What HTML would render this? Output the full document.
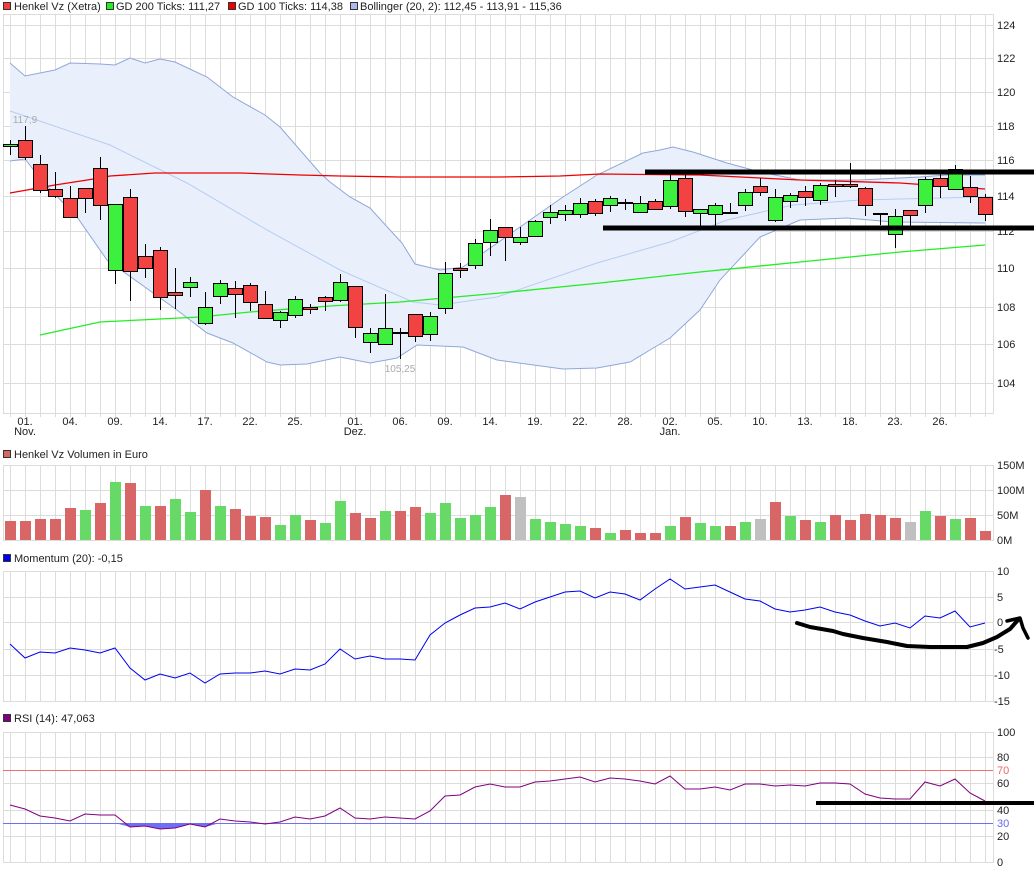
<!DOCTYPE html>
<html><head><meta charset="utf-8"><style>
html,body{margin:0;padding:0;background:#fff;width:1034px;height:873px;overflow:hidden}
svg{display:block}
text{font-family:"Liberation Sans",sans-serif;font-size:11px;fill:#222}
</style></head><body>
<svg id="s" width="1034" height="873" xmlns="http://www.w3.org/2000/svg">
<g id="grid" stroke="#dcdcdc" stroke-width="1" shape-rendering="crispEdges"></g>
<g id="boll"></g>
<g id="ma"></g>
<g id="candles" shape-rendering="crispEdges"></g>
<g id="vol" shape-rendering="crispEdges"></g>
<g id="ind"></g>
<!-- legends -->
<rect x="3.5" y="2.5" width="7" height="7" fill="#f04040" stroke="#333"/><text x="14" y="10">Henkel Vz (Xetra)</text>
<rect x="106.5" y="2.5" width="7" height="7" fill="#22ee22" stroke="#333"/><text x="116" y="10">GD 200 Ticks: 111,27</text>
<rect x="228.5" y="2.5" width="7" height="7" fill="#ee0000" stroke="#333"/><text x="238" y="10">GD 100 Ticks: 114,38</text>
<rect x="350.5" y="2.5" width="7" height="7" fill="#aabbe8" stroke="#333"/><text x="360" y="10">Bollinger (20, 2): 112,45 - 113,91 - 115,36</text>
<rect x="3.5" y="450.5" width="7" height="7" fill="#d96666" stroke="#333"/><text x="14" y="458">Henkel Vz Volumen in Euro</text>
<rect x="3.5" y="554.5" width="7" height="7" fill="#0000ee" stroke="#333"/><text x="14" y="562">Momentum (20): -0,15</text>
<rect x="3.5" y="714.5" width="7" height="7" fill="#800080" stroke="#333"/><text x="14" y="722">RSI (14): 47,063</text>
<!-- price labels -->
<g>
<text x="997" y="29">124</text><text x="997" y="62">122</text><text x="997" y="96">120</text><text x="997" y="130">118</text><text x="997" y="164">116</text><text x="997" y="200">114</text><text x="997" y="235">112</text><text x="997" y="272">110</text><text x="997" y="311">108</text><text x="997" y="348">106</text><text x="997" y="387">104</text>
<text x="997" y="469">150M</text><text x="997" y="494">100M</text><text x="997" y="519">50M</text><text x="997" y="544">0M</text>
<text x="997" y="575">10</text><text x="997" y="601">5</text><text x="997" y="626">0</text><text x="994" y="653">-5</text><text x="994" y="679">-10</text><text x="994" y="705">-15</text>
<text x="997" y="736">100</text><text x="997" y="761">80</text><text x="997" y="774" style="fill:#ee6666">70</text><text x="997" y="787">60</text><text x="997" y="814">40</text><text x="997" y="827" style="fill:#6666ee">30</text><text x="997" y="840">20</text><text x="997" y="866">0</text>
</g>
<g text-anchor="middle">
<text x="25" y="425">01.</text><text x="25" y="435">Nov.</text><text x="70" y="425">04.</text><text x="115" y="425">09.</text><text x="160" y="425">14.</text><text x="205" y="425">17.</text><text x="250" y="425">22.</text><text x="295" y="425">25.</text><text x="355" y="425">01.</text><text x="355" y="435">Dez.</text><text x="400" y="425">06.</text><text x="445" y="425">09.</text><text x="490" y="425">14.</text><text x="535" y="425">19.</text><text x="580" y="425">22.</text><text x="625" y="425">28.</text><text x="670" y="425">02.</text><text x="670" y="435">Jan.</text><text x="715" y="425">05.</text><text x="760" y="425">10.</text><text x="805" y="425">13.</text><text x="850" y="425">18.</text><text x="895" y="425">23.</text><text x="940" y="425">26.</text>
<text x="25" y="123" style="fill:#aaa;font-size:10px">117,9</text>
<text x="400" y="372" style="fill:#aaa;font-size:10px">105,25</text>
</g>
<g id="draw"></g>
</svg>
<script>
var NS="http://www.w3.org/2000/svg";
function el(p,t,a){var e=document.createElementNS(NS,t);for(var k in a)e.setAttribute(k,a[k]);document.getElementById(p).appendChild(e);return e;}
// grid
var panels=[[14,413,[14,25,58,92,126,160,196,231,268,307,344,383,413]],[465,540,[465,490,515,540]],[571,701,[571,597,622,649,675,701]],[732,862,[732,757,783,810,836,862]]];
panels.forEach(function(p){
 for(var x=10;x<=985;x+=15) el("grid","line",{x1:x+.5,y1:p[0],x2:x+.5,y2:p[1]});
 el("grid","line",{x1:3.5,y1:p[0],x2:3.5,y2:p[1]});
 el("grid","line",{x1:993.5,y1:p[0],x2:993.5,y2:p[1]});
 p[2].forEach(function(y){el("grid","line",{x1:3,y1:y+.5,x2:994,y2:y+.5});});
});
for(var x=10;x<=985;x+=15) el("grid","line",{x1:x+.5,y1:413,x2:x+.5,y2:417});
// bollinger
var up=[[10,63],[25,76],[55,70],[70,63],[100,64],[115,65],[130,58],[145,63],[160,59],[175,62],[207,77],[233,97],[265,115],[280,127],[320,173],[330,182],[350,197],[370,208],[390,230],[402,243],[415,264],[440,270],[463,267],[530,220],[563,197],[597,175],[643,153],[660,150],[673,147],[693,152],[727,163],[760,172],[800,180],[860,180],[920,177],[947,175],[985,175]];
var lo=[[10,161],[25,159],[43,182],[77,217],[107,260],[177,310],[207,333],[233,343],[267,362],[280,365],[307,364],[340,357],[370,363],[397,358],[417,345],[463,347],[497,360],[563,369],[597,368],[630,362],[650,350],[670,338],[700,310],[720,280],[760,237],[800,220],[847,218],[893,222],[985,223]];
var mid=[[10,111],[25,116],[110,145],[187,183],[267,230],[340,270],[413,302],[440,305],[497,297],[597,263],[670,242],[727,220],[793,205],[860,200],[985,197]];
function pts(a){return a.map(function(p){return p[0]+","+p[1]}).join(" ");}
el("boll","polygon",{points:pts(up)+" "+pts(lo.slice().reverse()),fill:"#e9f0fc"});
el("boll","polyline",{points:pts(up),fill:"none",stroke:"#8fa8d8","stroke-width":1});
el("boll","polyline",{points:pts(lo),fill:"none",stroke:"#8fa8d8","stroke-width":1});
el("boll","polyline",{points:pts(mid),fill:"none",stroke:"#b5cdf2","stroke-width":1});
el("ma","polyline",{points:"10,193 55,185 100,178 110,176 155,173 240,173 300,175 340,176 400,177 500,177 560,176 600,174 700,175 800,180 900,183 985,189",fill:"none",stroke:"#ee0000","stroke-width":1.3});
el("ma","polyline",{points:"40,335 100,322 200,317 250,312 330,306 400,302 500,293 600,283 700,272 800,262 900,252 985,245",fill:"none",stroke:"#22ee22","stroke-width":1.3});
// candles: [bodyTop, bodyBot, wickHi, wickLo, color] x=10+15k
var C=[[144,146,140,155,'g'],[140,157,126,160,'r'],[164,190,155,193,'r'],[189,196,172,198,'r'],[198,217,186,217,'r'],[188,198,188,213,'r'],[168,205,157,220,'r'],[204,270,204,284,'g'],[197,271,189,301,'r'],[256,268,244,278,'r'],[250,297,247,310,'r'],[292,295,268,309,'r'],[282,287,277,297,'g'],[307,323,292,325,'g'],[283,296,280,304,'g'],[288,294,281,318,'r'],[285,302,283,311,'r'],[304,318,291,318,'r'],[312,320,311,328,'g'],[299,315,296,318,'g'],[307,309,304,314,'r'],[297,301,296,311,'r'],[282,300,274,302,'g'],[286,327,286,338,'r'],[333,342,328,353,'g'],[328,344,294,344,'g'],[332,333,328,359,'k'],[314,336,314,342,'r'],[316,334,312,341,'g'],[273,308,262,314,'g'],[268,270,263,278,'r'],[243,265,239,269,'g'],[230,242,219,256,'g'],[227,237,227,261,'r'],[237,242,227,245,'g'],[221,236,220,236,'g'],[212,217,205,224,'g'],[210,214,205,221,'g'],[203,214,198,218,'g'],[201,213,199,216,'r'],[198,205,196,212,'g'],[202,203,199,210,'k'],[203,212,196,213,'g'],[201,209,199,210,'r'],[180,206,174,209,'g'],[178,211,174,217,'r'],[209,213,209,226,'g'],[205,214,203,226,'g'],[212,213,203,213,'k'],[192,205,189,211,'g'],[186,192,178,196,'r'],[197,220,189,222,'g'],[195,201,193,208,'g'],[191,197,186,206,'r'],[185,200,183,205,'g'],[184,186,180,197,'r'],[184,186,163,188,'r'],[188,205,187,216,'r'],[213,214,213,225,'k'],[216,234,209,248,'g'],[210,215,210,226,'r'],[179,205,177,213,'g'],[178,186,170,198,'r'],[169,189,165,189,'g'],[187,196,176,203,'r'],[197,214,194,221,'r']];
C.forEach(function(c,k){var x=10+15*k;
 el("candles","line",{x1:x+.5,y1:c[2],x2:x+.5,y2:c[3],stroke:"#000","stroke-width":1.3});
 if(c[4]=='k'){el("candles","rect",{x:x-7,y:c[0],width:15,height:2,fill:"#000"});return;}
 el("candles","rect",{x:x-6.5,y:c[0]+.5,width:14,height:Math.max(2,c[1]-c[0]),fill:c[4]=='g'?"#3ef03e":"#f24242",stroke:"#000","stroke-width":1.3});
});
// volume
var V=[[19,'r'],[19,'r'],[21,'r'],[21,'r'],[32,'r'],[30,'g'],[37,'r'],[58,'g'],[57,'r'],[34,'g'],[34,'r'],[41,'g'],[28,'g'],[50,'r'],[34,'g'],[31,'r'],[24,'r'],[23,'r'],[15,'g'],[25,'g'],[20,'r'],[17,'g'],[39,'g'],[27,'r'],[22,'r'],[29,'g'],[29,'r'],[33,'r'],[27,'g'],[37,'g'],[22,'g'],[25,'g'],[33,'g'],[45,'r'],[43,'x'],[21,'g'],[18,'g'],[16,'g'],[14,'g'],[12,'r'],[7,'g'],[10,'r'],[7,'r'],[7,'r'],[14,'g'],[23,'r'],[17,'g'],[14,'g'],[14,'r'],[18,'g'],[21,'x'],[38,'r'],[24,'g'],[20,'r'],[18,'g'],[25,'r'],[20,'r'],[26,'r'],[25,'r'],[22,'r'],[18,'x'],[29,'g'],[24,'r'],[21,'g'],[22,'r'],[9,'r']];
V.forEach(function(v,k){var x=10+15*k;el("vol","rect",{x:x-5,y:540-v[0],width:11,height:v[0],fill:v[1]=='g'?"#66d966":v[1]=='r'?"#d96666":"#c0c0c0"});});
// momentum
var M=[644,658,652,653,648,650,653,648,668,680,674,678,673,683,674,673,673,671,674,669,670,664,649,659,656,659,659,660,635,623,615,608,607,603,609,602,597,592,591,598,592,594,600,589,579,589,587,585,592,599,601,609,612,610,607,612,615,621,626,623,628,616,618,611,627,623];
el("ind","polyline",{points:M.map(function(y,k){return (10+15*k)+","+y}).join(" "),fill:"none",stroke:"#0000ee","stroke-width":1});
// rsi
var R=[805,809,816,818,821,814,815,815,827,826,829,828,824,827,819,821,822,824,822,817,819,816,808,818,819,817,818,819,811,796,795,787,784,787,787,782,781,779,777,782,778,779,781,784,776,789,789,787,790,784,784,786,785,786,783,783,784,794,798,799,799,782,786,779,793,801];
var fill="";for(var k=7;k<=14;k++){fill+=(10+15*k)+","+Math.max(823,R[k])+" ";}
el("ind","polygon",{points:"128,823 "+fill+"212,823",fill:"#6f6ff5"});
el("ind","line",{x1:3,y1:770.5,x2:993,y2:770.5,stroke:"#f07070"});
el("ind","line",{x1:3,y1:823.5,x2:993,y2:823.5,stroke:"#6f6ff5"});
el("ind","polyline",{points:R.map(function(y,k){return (10+15*k)+","+y}).join(" "),fill:"none",stroke:"#800080","stroke-width":1});
// hand drawings
el("draw","line",{x1:645,y1:172,x2:1034,y2:172,stroke:"#000","stroke-width":5});
el("draw","line",{x1:603,y1:228,x2:1034,y2:228,stroke:"#000","stroke-width":5});
el("draw","line",{x1:816,y1:803,x2:1034,y2:803,stroke:"#000","stroke-width":4});
el("draw","polyline",{points:"797,623 810,627 833,631 843,634 863,638 887,642 907,646 930,647 967,647 983,643 997,637 1010,629 1018,620",fill:"none",stroke:"#000","stroke-width":4,"stroke-linecap":"round","stroke-linejoin":"round"});
el("draw","polyline",{points:"1007,621 1020,618 1023,628 1028,638",fill:"none",stroke:"#000","stroke-width":3.5,"stroke-linecap":"round","stroke-linejoin":"round"});
</script>
</body></html>
